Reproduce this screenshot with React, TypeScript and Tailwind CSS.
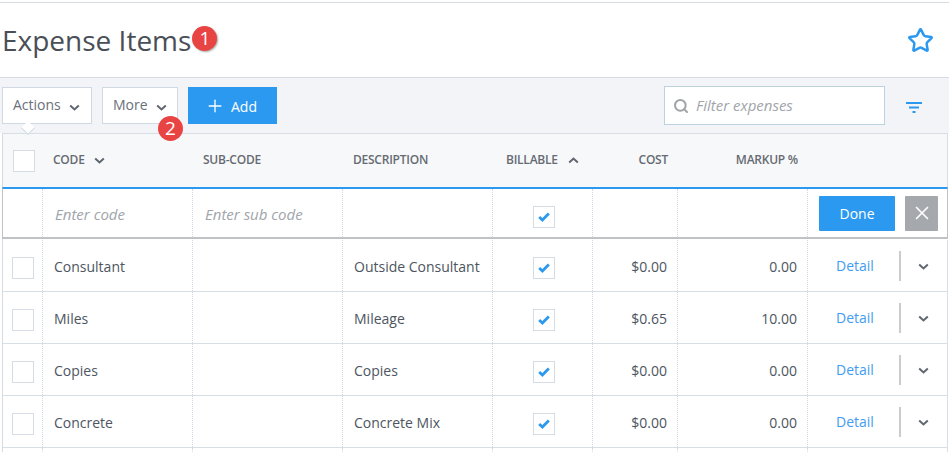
import { Plus, Search, Star, X } from "lucide-react";

const ROWS = [
  { code: "Consultant", description: "Outside Consultant", cost: "$0.00", markup: "0.00" },
  { code: "Miles", description: "Mileage", cost: "$0.65", markup: "10.00" },
  { code: "Copies", description: "Copies", cost: "$0.00", markup: "0.00" },
  { code: "Concrete", description: "Concrete Mix", cost: "$0.00", markup: "0.00" },
];

const GRID = "grid grid-cols-[40px_150px_150px_150px_100px_85px_130px_1fr]";
const CELL = "border-r border-dotted border-[#d0d9e5] flex items-center";

function Chevron({ up = false, className = "" }: { up?: boolean; className?: string }) {
  return (
    <svg className={className} width="11" height="7" viewBox="0 0 11 7" fill="none">
      <path
        d={up ? "M1.2 5.6L5.5 1.6L9.8 5.6" : "M1.2 1.4L5.5 5.4L9.8 1.4"}
        stroke="#5f6670"
        strokeWidth="2"
      />
    </svg>
  );
}

function Check({ checked = false, className = "" }: { checked?: boolean; className?: string }) {
  return (
    <span className={`w-[22px] h-[22px] border border-[#d5dce6] bg-white flex items-center justify-center ${className}`}>
      {checked && (
        <svg width="12" height="10" viewBox="0 0 12 10" fill="none">
          <path d="M1.2 5L4.4 8L10.8 1.6" stroke="#2b99f0" strokeWidth="2.8" />
        </svg>
      )}
    </span>
  );
}

function Badge({ n, className = "" }: { n: number; className?: string }) {
  return (
    <span className={`w-[25px] h-[25px] rounded-full bg-[#e94444] text-white text-[19px] leading-none flex items-center justify-center ${className}`}>
      {n}
    </span>
  );
}

export default function App() {
  return (
    <div className="h-[452px] w-[949px] overflow-hidden bg-white text-[14px] text-[#4d5560] font-['Open_Sans',sans-serif] pt-[2px]">
      <header className="h-[76px] border-y border-[#d3dbe3] flex items-center justify-between pl-[2px] pr-[15px]">
        <div className="flex items-center">
          <h1 className="text-[28px] leading-none text-[#4a4f57]">Expense Items</h1>
          <Badge n={1} className="mb-[3px] ml-[1px] shadow-[1px_1px_2px_rgba(0,0,0,0.35)]" />
        </div>
        <Star size={27} strokeWidth={2.2} className="text-[#2b99f0]" />
      </header>

      <div className="h-[55px] bg-[#f2f4f7] flex items-start pt-[9px] pl-[2px] pr-[27px]">
        <button className="relative w-[90px] h-[37px] border border-[#cfd9e2] bg-white flex items-center justify-between pl-[10px] pr-[11px] text-[#6a7079]">
          <span className="pb-[2px]">Actions</span>
          <Chevron className="mt-[3px]" />
          <span className="absolute left-[20px] top-[35px] w-[10px] h-[10px] rotate-45 bg-white border-r border-b border-[#cfd9e2]" />
        </button>
        <button className="relative ml-[10px] w-[76px] h-[37px] border border-[#cfd9e2] bg-white flex items-center justify-between pl-[10px] pr-[10px] text-[#6a7079]">
          <span className="pb-[2px]">More</span>
          <Chevron className="mt-[3px]" />
          <Badge n={2} className="absolute left-[55px] top-[28px] z-10" />
        </button>
        <button className="ml-[10px] w-[89px] h-[37px] bg-[#2b99f0] text-white font-medium flex items-center pl-[17px] gap-[6px]">
          <Plus size={20} strokeWidth={1.6} />
          <span className="pt-[2px]">Add</span>
        </button>
        <div className="ml-auto w-[221px] h-[39px] -mt-[1px] border border-[#bcd2de] bg-white flex items-center pl-[8px] gap-[7px] text-[15px] text-[#a0a5ab] italic">
          <Search size={16} strokeWidth={3} className="text-[#a0a4a8]" />
          Filter expenses
        </div>
        <svg className="ml-[21px] mt-[15px]" width="16" height="12" viewBox="0 0 16 12" fill="#2b99f0">
          <rect x="0" y="0" width="16" height="2" />
          <rect x="3" y="4.5" width="10" height="2" />
          <rect x="6.5" y="9" width="3" height="2" />
        </svg>
      </div>

      <div className="ml-[2px] mr-[1px] border-l border-[#d3dbe3]">
        <div className={`${GRID} h-[54px] bg-[#f7f8f9] border-t border-r border-[#d8dee5] text-[12px] font-semibold tracking-[-0.02em] text-[#666b73] items-center`}>
          <div className="pl-[10px] flex">
            <Check />
          </div>
          <div className="pl-[10px] flex items-center gap-[9px]">
            <span className="pb-[2px]">CODE</span>
            <Chevron />
          </div>
          <div className="pl-[10px] pb-[2px]">SUB-CODE</div>
          <div className="pl-[10px] pb-[2px]">DESCRIPTION</div>
          <div className="pl-[13px] flex items-center gap-[10px]">
            <span className="pb-[2px]">BILLABLE</span>
            <Chevron up />
          </div>
          <div className="pr-[10px] pb-[2px] text-right">COST</div>
          <div className="pr-[10px] pb-[2px] text-right">MARKUP %</div>
          <div />
        </div>

        <div className={`${GRID} h-[52px] border-t-2 border-t-[#2b99f0] border-b-2 border-b-[#c0c3c6] border-x border-x-[#c0c3c6] -ml-px text-[15px] text-[#a0a5ab] italic`}>
          <div className={CELL} />
          <div className={`${CELL} pl-[12px] pt-[2px]`}>Enter code</div>
          <div className={`${CELL} pl-[12px] pt-[2px]`}>Enter sub code</div>
          <div className={CELL} />
          <div className={`${CELL} justify-center pl-[2px] pt-[4px]`}>
            <Check checked className="mt-[3px]" />
          </div>
          <div className={CELL} />
          <div className={CELL} />
          <div className="col-span-1 flex items-center gap-[10px] pl-[11px] text-[14px] not-italic">
            <button className="w-[76px] h-[35px] bg-[#2b99f0] rounded-[1px] text-white">Done</button>
            <button className="w-[33px] h-[35px] bg-[#a5a8ac] rounded-[1px] text-white flex items-center justify-center">
              <X size={22} strokeWidth={1.8} />
            </button>
          </div>
        </div>

        <div className="mt-px">
          {ROWS.map((row) => (
            <div key={row.code} className={`${GRID} h-[52px] border-b border-r border-[#d8dee5]`}>
              <div className={`${CELL} pl-[9px] pt-[3px]`}>
                <Check className="mt-[2px]" />
              </div>
              <div className={`${CELL} pl-[11px] pt-[1px]`}>{row.code}</div>
              <div className={CELL} />
              <div className={`${CELL} pl-[11px] pt-[1px]`}>{row.description}</div>
              <div className={`${CELL} justify-center pl-[2px] pt-[3px]`}>
                <Check checked className="mt-[2px]" />
              </div>
              <div className={`${CELL} justify-end pr-[10px] pt-[1px]`}>{row.cost}</div>
              <div className={`${CELL} justify-end pr-[10px] pt-[1px]`}>{row.markup}</div>
              <div className="flex items-center">
                <a className="ml-[28px] w-[63px] pb-[1px] text-[#3f9cf2]">Detail</a>
                <span className="h-[30px] w-[2px] mt-[1px] bg-[#c9cccf]" />
                <Chevron className="ml-[17px] mt-[2px]" />
              </div>
            </div>
          ))}
          <div className={`${GRID} h-[6px] border-r border-[#d8dee5]`}>
            <div className={CELL} />
            <div className={CELL} />
            <div className={CELL} />
            <div className={CELL} />
            <div className={CELL} />
            <div className={CELL} />
            <div className={CELL} />
            <div />
          </div>
        </div>
      </div>
    </div>
  );
}
